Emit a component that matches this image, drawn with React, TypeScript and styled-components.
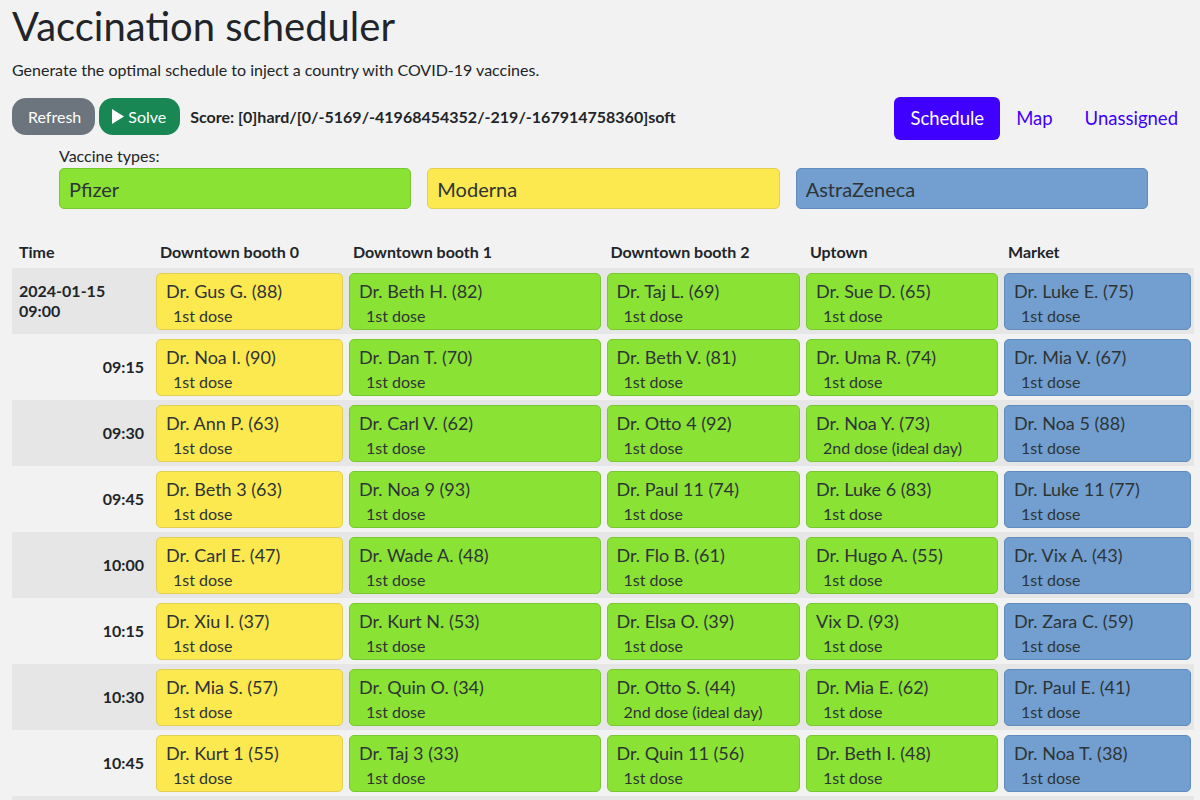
import React from "react";
import styled, { createGlobalStyle } from "styled-components";

const Global = createGlobalStyle`
  html, body { margin: 0; padding: 0; overflow: hidden; }
  body {
    background: #f2f2f2;
    color: #2e3436;
    font-family: Lato, "Noto Sans", sans-serif;
  }
  * { box-sizing: border-box; }
`;

const Page = styled.div`
  padding: 0 6px 0 12px;
`;

const Title = styled.h1`
  margin: 0;
  padding-top: 2px;
  font-size: 40px;
  font-weight: 400;
  line-height: 48px;
  color: #212529;
`;

const Subtitle = styled.p`
  margin: 9px 0 0;
  font-size: 16px;
  line-height: 22px;
  color: #212529;
`;

const Toolbar = styled.div`
  display: flex;
  align-items: flex-start;
  justify-content: space-between;
  margin-top: 16px;
`;

const Left = styled.div`
  display: flex;
  align-items: center;
  gap: 4px;
  margin-top: 1px;
`;

const Button = styled.button<{ $bg: string; $pl: number }>`
  display: inline-flex;
  align-items: center;
  gap: 3px;
  height: 37px;
  padding: 0 14px 0 ${(p) => p.$pl}px;
  border: none;
  border-radius: 14px;
  background: ${(p) => p.$bg};
  color: #fff;
  font-family: inherit;
  font-size: 16px;
`;

const Score = styled.span`
  margin-left: 6px;
  font-weight: 700;
  font-size: 16px;
  color: #212529;
`;

const Tabs = styled.nav`
  display: flex;
  align-items: center;
`;

const Tab = styled.a<{ $active?: boolean }>`
  display: inline-block;
  padding: 10px 16px;
  border-radius: 6px;
  font-size: 18.5px;
  line-height: 23px;
  background: ${(p) => (p.$active ? "#3f00ff" : "transparent")};
  color: ${(p) => (p.$active ? "#fff" : "#3f00ff")};
`;

const Legend = styled.div`
  margin: 7px 0 0 47px;
  width: 1089px;
`;

const LegendLabel = styled.div`
  font-size: 16px;
  line-height: 18px;
  color: #212529;
`;

const LegendGrid = styled.div`
  display: grid;
  grid-template-columns: repeat(3, 1fr);
  gap: 16px;
  margin-top: 3px;
`;

const VaccineBox = styled.div<{ $bg: string; $bd: string }>`
  height: 41px;
  display: flex;
  align-items: center;
  padding: 0 9px;
  background: ${(p) => p.$bg};
  border: 1px solid ${(p) => p.$bd};
  border-radius: 5px;
  font-size: 20px;
`;

const Table = styled.div`
  margin-top: 25px;
  display: grid;
  grid-template-columns: 141px 193px 257.5px 199.5px 198px 193px;
`;

const HeadCell = styled.div`
  padding: 0 7px;
  height: 34px;
  display: flex;
  align-items: center;
  font-weight: 700;
  font-size: 16px;
  color: #212529;
`;

const Row = styled.div<{ $striped: boolean }>`
  display: contents;
  & > div {
    background: ${(p) => (p.$striped ? "#e6e6e6" : "#f2f2f2")};
  }
`;

const TimeCell = styled.div<{ $left?: boolean }>`
  height: 66px;
  display: flex;
  align-items: center;
  justify-content: ${(p) => (p.$left ? "flex-start" : "flex-end")};
  padding: 0 9px 0 7px;
  font-weight: 700;
  font-size: 16px;
  line-height: 20px;
  color: #212529;
`;

const SlotCell = styled.div`
  height: 66px;
  padding: 5px 3px 4px;
`;

const Card = styled.div<{ $bg: string; $bd: string }>`
  height: 57px;
  background: ${(p) => p.$bg};
  border: 1px solid ${(p) => p.$bd};
  border-radius: 5px;
  padding: 5px 9px 0;
`;

const Name = styled.div`
  font-size: 18px;
  line-height: 24px;
`;

const Dose = styled.div`
  font-size: 16px;
  line-height: 20px;
  margin-top: 3px;
  padding-left: 7px;
`;

const colors = {
  Y: { bg: "#fce84f", bd: "#e3cf52" },
  G: { bg: "#8ae234", bd: "#78c832" },
  B: { bg: "#729fcf", bd: "#5f8cbd" },
};

const colColors: Array<keyof typeof colors> = ["Y", "G", "G", "G", "B"];

const headers = ["Time", "Downtown booth 0", "Downtown booth 1", "Downtown booth 2", "Uptown", "Market"];

const I = "1st dose";
const II = "2nd dose (ideal day)";

const rows: Array<{ time: React.ReactNode; left?: boolean; cells: Array<[string, string]> }> = [
  {
    time: (
      <span>
        2024-01-15
        <br />
        09:00
      </span>
    ),
    left: true,
    cells: [["Dr. Gus G. (88)", I], ["Dr. Beth H. (82)", I], ["Dr. Taj L. (69)", I], ["Dr. Sue D. (65)", I], ["Dr. Luke E. (75)", I]],
  },
  { time: "09:15", cells: [["Dr. Noa I. (90)", I], ["Dr. Dan T. (70)", I], ["Dr. Beth V. (81)", I], ["Dr. Uma R. (74)", I], ["Dr. Mia V. (67)", I]] },
  { time: "09:30", cells: [["Dr. Ann P. (63)", I], ["Dr. Carl V. (62)", I], ["Dr. Otto 4 (92)", I], ["Dr. Noa Y. (73)", II], ["Dr. Noa 5 (88)", I]] },
  { time: "09:45", cells: [["Dr. Beth 3 (63)", I], ["Dr. Noa 9 (93)", I], ["Dr. Paul 11 (74)", I], ["Dr. Luke 6 (83)", I], ["Dr. Luke 11 (77)", I]] },
  { time: "10:00", cells: [["Dr. Carl E. (47)", I], ["Dr. Wade A. (48)", I], ["Dr. Flo B. (61)", I], ["Dr. Hugo A. (55)", I], ["Dr. Vix A. (43)", I]] },
  { time: "10:15", cells: [["Dr. Xiu I. (37)", I], ["Dr. Kurt N. (53)", I], ["Dr. Elsa O. (39)", I], ["Vix D. (93)", I], ["Dr. Zara C. (59)", I]] },
  { time: "10:30", cells: [["Dr. Mia S. (57)", I], ["Dr. Quin O. (34)", I], ["Dr. Otto S. (44)", II], ["Dr. Mia E. (62)", I], ["Dr. Paul E. (41)", I]] },
  { time: "10:45", cells: [["Dr. Kurt 1 (55)", I], ["Dr. Taj 3 (33)", I], ["Dr. Quin 11 (56)", I], ["Dr. Beth I. (48)", I], ["Dr. Noa T. (38)", I]] },
];

const PlayIcon = () => (
  <svg width="14" height="17" viewBox="0 0 14 17">
    <polygon points="1,1 13,8.5 1,16" fill="#fff" />
  </svg>
);

export default function App() {
  return (
    <Page>
      <Global />
      <Title>Vaccination scheduler</Title>
      <Subtitle>Generate the optimal schedule to inject a country with COVID-19 vaccines.</Subtitle>
      <Toolbar>
        <Left>
          <Button $bg="#6c757d" $pl={16}>Refresh</Button>
          <Button $bg="#198754" $pl={12}>
            <PlayIcon />
            Solve
          </Button>
          <Score>Score: [0]hard/[0/-5169/-41968454352/-219/-167914758360]soft</Score>
        </Left>
        <Tabs>
          <Tab $active>Schedule</Tab>
          <Tab>Map</Tab>
          <Tab>Unassigned</Tab>
        </Tabs>
      </Toolbar>
      <Legend>
        <LegendLabel>Vaccine types:</LegendLabel>
        <LegendGrid>
          <VaccineBox $bg={colors.G.bg} $bd={colors.G.bd}>Pfizer</VaccineBox>
          <VaccineBox $bg={colors.Y.bg} $bd={colors.Y.bd}>Moderna</VaccineBox>
          <VaccineBox $bg={colors.B.bg} $bd={colors.B.bd}>AstraZeneca</VaccineBox>
        </LegendGrid>
      </Legend>
      <Table>
        {headers.map((h) => (
          <HeadCell key={h}>{h}</HeadCell>
        ))}
        {rows.map((r, i) => (
          <Row key={i} $striped={i % 2 === 0}>
            <TimeCell $left={r.left}>{r.time}</TimeCell>
            {r.cells.map(([name, dose], j) => {
              const c = colors[colColors[j]];
              return (
                <SlotCell key={j}>
                  <Card $bg={c.bg} $bd={c.bd}>
                    <Name>{name}</Name>
                    <Dose>{dose}</Dose>
                  </Card>
                </SlotCell>
              );
            })}
          </Row>
        ))}
        <Row $striped>
          <TimeCell />
          <SlotCell />
          <SlotCell />
          <SlotCell />
          <SlotCell />
          <SlotCell />
        </Row>
      </Table>
    </Page>
  );
}
